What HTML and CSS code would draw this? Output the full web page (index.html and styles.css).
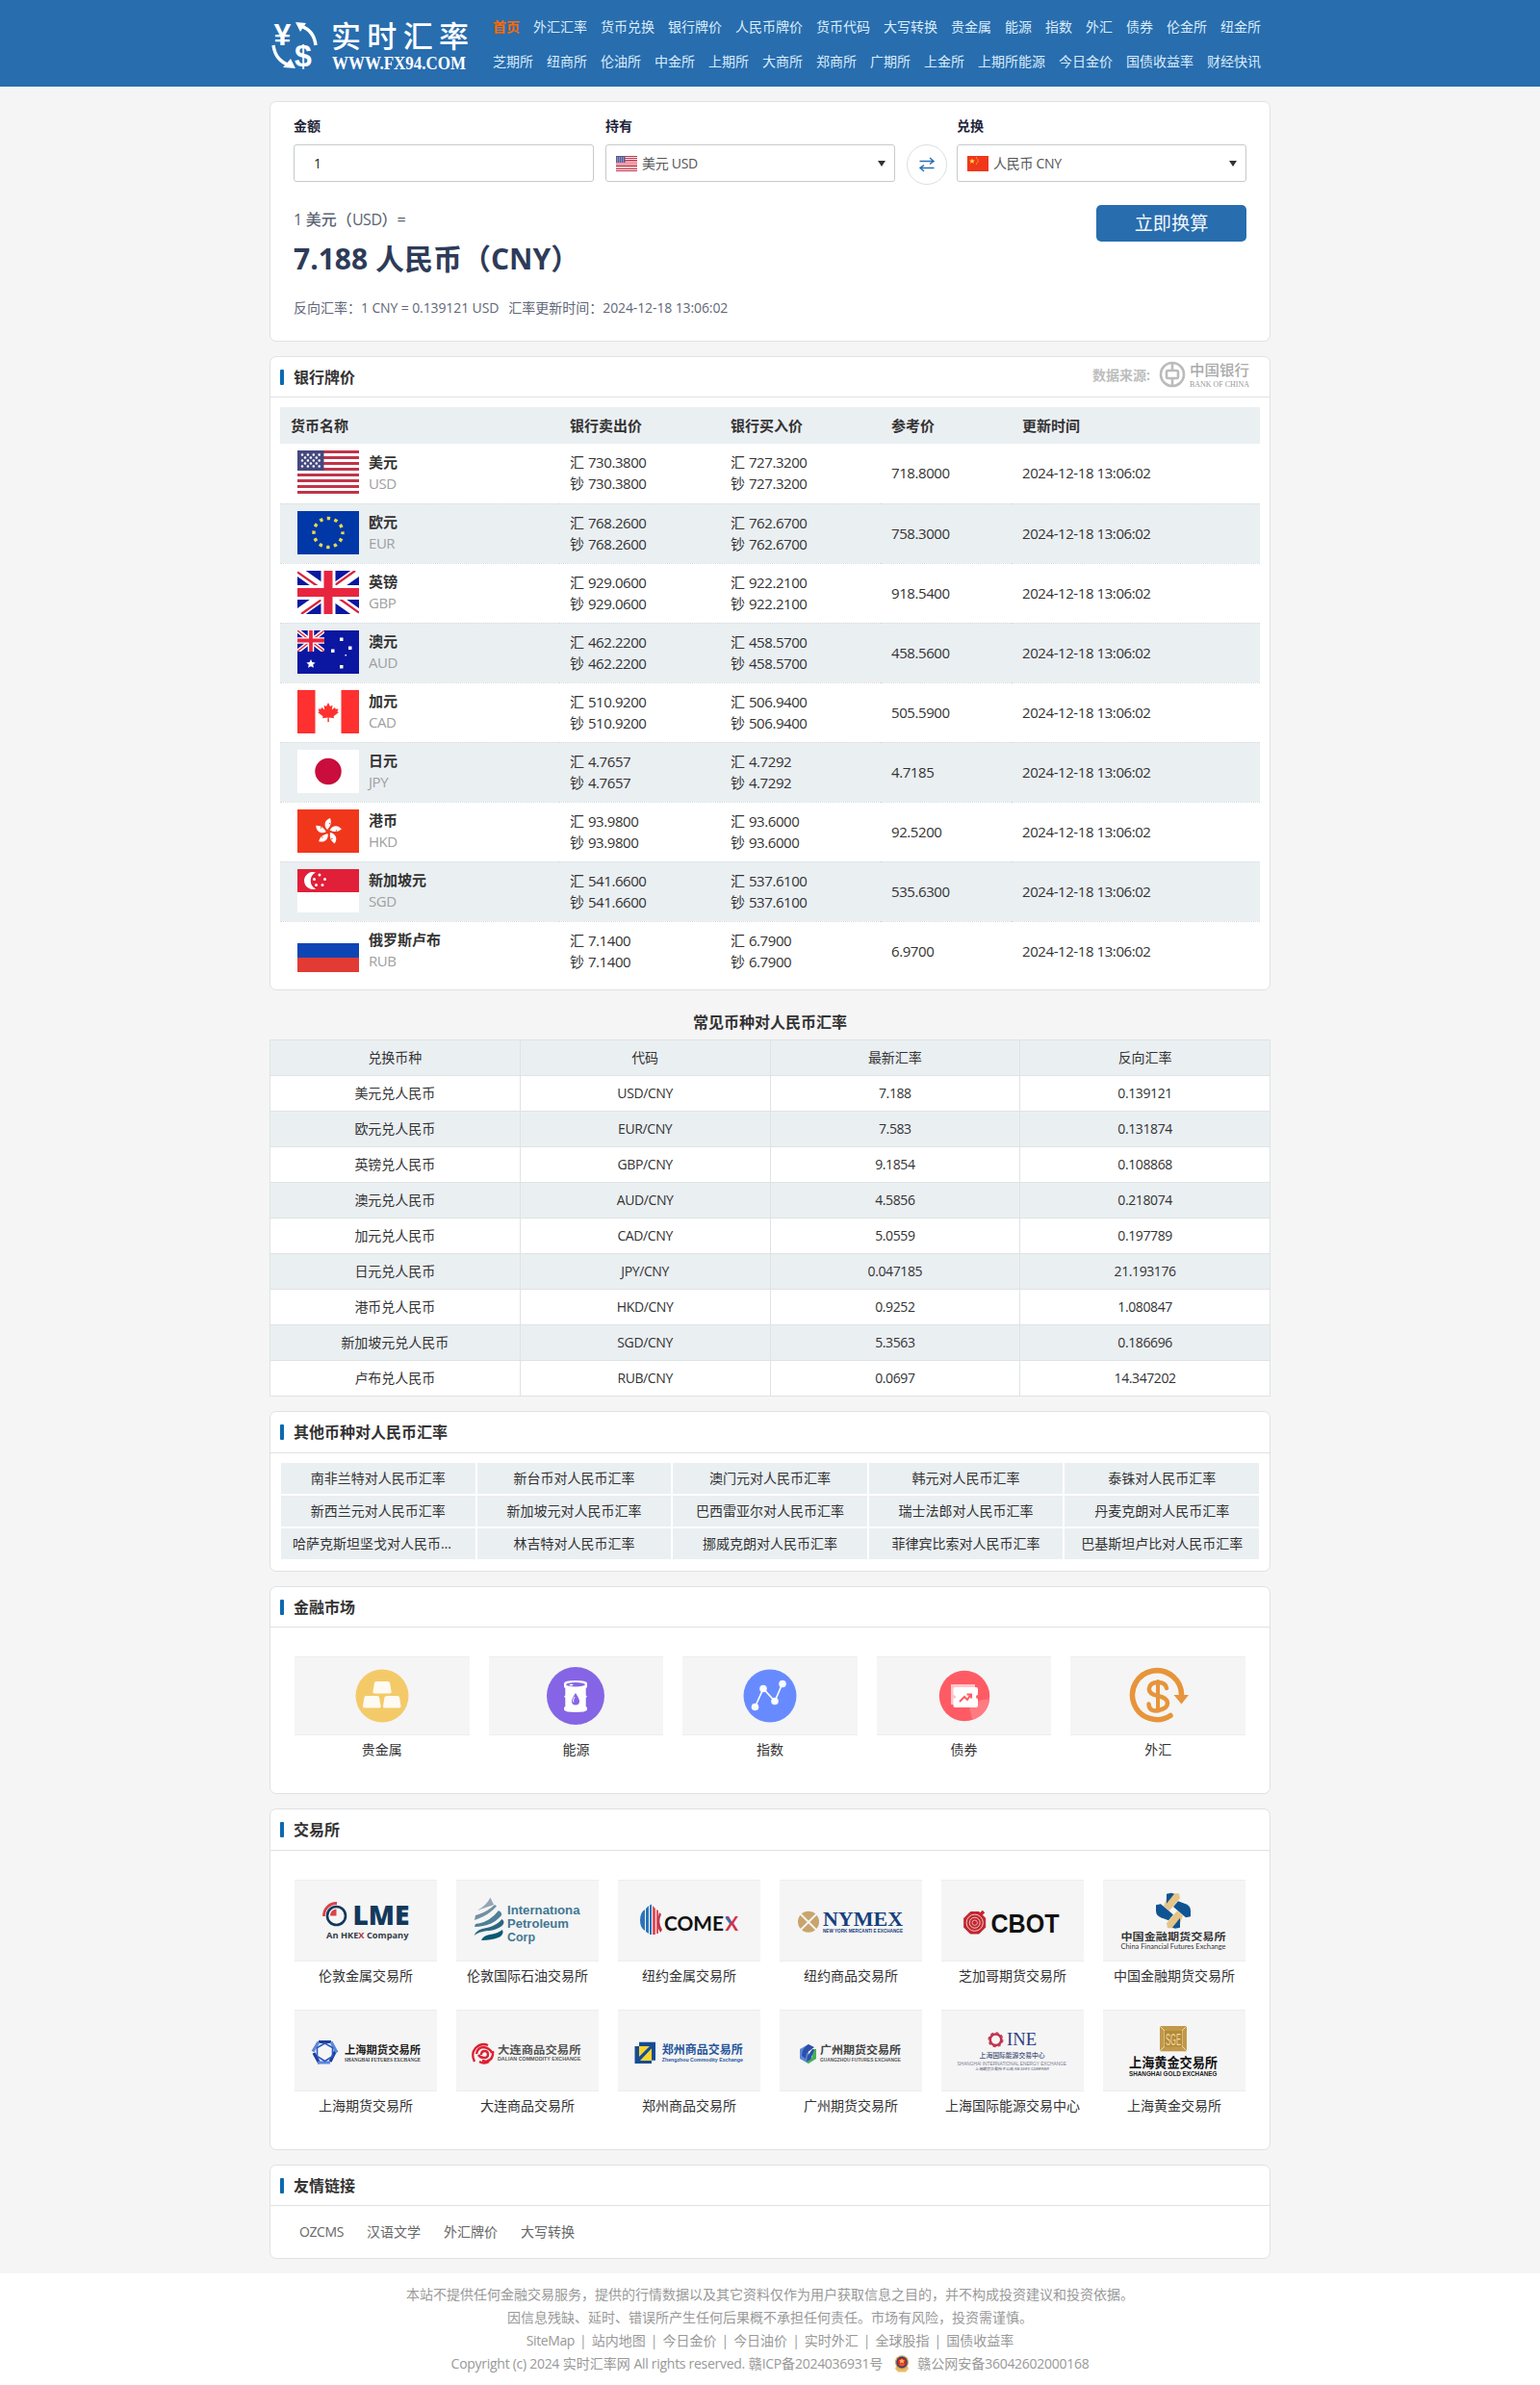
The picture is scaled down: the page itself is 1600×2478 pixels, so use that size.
FILE: index.html
```html
<!DOCTYPE html>
<html lang="zh-CN">
<head>
<meta charset="utf-8">
<title>实时汇率</title>
<link rel="stylesheet" href="styles.css">
</head>
<body>
<header class="top">
  <div class="wrap top-in">
    <svg class="logo" width="224" height="90" viewBox="0 0 224 90">
      <g fill="none" stroke="#fff" stroke-width="3.400"><path d="M32 27Q46 31 48 47"/><path d="M4 47Q6 63 21 68"/></g>
      <path d="M27 23l11 1-6 9zM27 71l-13-1 8-9z" fill="#fff"/>
      <text x="4.500" y="47" class="lg-yen">¥</text>
      <text x="26" y="69" class="lg-dol">$</text>
      <text x="64" y="49" class="lg-cn" textLength="143">实时汇率</text>
      <text x="65" y="71.500" class="lg-en" textLength="139" lengthAdjust="spacingAndGlyphs">WWW.FX94.COM</text>
    </svg>
    <nav class="nav">
      <div class="nav-row"><a class="on">首页</a><a>外汇汇率</a><a>货币兑换</a><a>银行牌价</a><a>人民币牌价</a><a>货币代码</a><a>大写转换</a><a>贵金属</a><a>能源</a><a>指数</a><a>外汇</a><a>债券</a><a>伦金所</a><a>纽金所</a></div>
      <div class="nav-row"><a>芝期所</a><a>纽商所</a><a>伦油所</a><a>中金所</a><a>上期所</a><a>大商所</a><a>郑商所</a><a>广期所</a><a>上金所</a><a>上期所能源</a><a>今日金价</a><a>国债收益率</a><a>财经快讯</a></div>
    </nav>
  </div>
</header>

<main class="wrap main">
  <section class="card conv">
    <div class="conv-row">
      <div class="fld f-amt"><label>金额</label><div class="box amt">1</div></div>
      <div class="fld f-sel"><label>持有</label><div class="box sel">
        <svg width="22" height="16" viewBox="0 0 22 16"><rect width="22" height="16" fill="#e8a0a8"/><g fill="#c0344c"><rect width="22" height="1"/><rect y="2" width="22" height="1"/><rect y="4" width="22" height="1"/><rect y="10" width="22" height="1"/><rect y="13" width="22" height="1"/><rect y="15" width="22" height="1"/></g><path d="M9 1.500h13M9 3.500h13M0 12h22M0 14.500h22" stroke="#fff" stroke-width=".8"/><rect width="9.500" height="7" fill="#5b5a95"/><path d="M1 2h8M1 4h8M1 6h8" stroke="#c9c8e4" stroke-dasharray="1 1"/></svg>
        <span>美元 USD</span><i></i></div></div>
      <div class="swap"><svg width="16" height="16" viewBox="0 0 16 16" fill="none" stroke="#2a6fb3" stroke-width="1.500"><path d="M.5 4.500h14M11 1l4 3.500-4 3M15.500 11.500h-14M5 8.500l-4 3 4 3.500"/></svg></div>
      <div class="fld f-sel"><label>兑换</label><div class="box sel">
        <svg width="22" height="16" viewBox="0 0 22 16"><rect width="22" height="16" fill="#f0371a"/><path d="M5 2.500l.8 2.100h2.200l-1.800 1.300.7 2.100L5 6.700 3.100 8l.7-2.100L2 4.600h2.200z" fill="#fd4"/><path d="M9 2h1M10.500 4h1M10.500 6h1M9 8h1" stroke="#fd4"/></svg>
        <span>人民币 CNY</span><i></i></div></div>
    </div>
    <div class="res-row">
      <div>
        <div class="res-a"><span class="n">1</span> 美元（<span class="n">USD</span>）=</div>
        <div class="res-b">7.188 人民币（CNY）</div>
        <div class="res-c">反向汇率：<span class="n">1 CNY = 0.139121 USD</span><span class="gap"></span>汇率更新时间：<span class="n">2024-12-18 13:06:02</span></div>
      </div>
      <a class="btn">立即换算</a>
    </div>
  </section>

  <section class="card bank">
    <div class="head"><h2>银行牌价</h2>
      <div class="src"><b>数据来源:</b>
        <svg width="104" height="34" viewBox="0 0 104 34"><g fill="none" stroke="#bbb" stroke-width="2.600"><circle cx="14" cy="16" r="12"/><rect x="8" y="12" width="12" height="8" rx="1.500"/><path d="M14 4v8M14 20v8"/></g><text x="32" y="17" class="boc-cn" textLength="62" lengthAdjust="spacingAndGlyphs">中国银行</text><text x="32" y="29" class="boc-en" textLength="62" lengthAdjust="spacingAndGlyphs">BANK OF CHINA</text></svg>
      </div>
    </div>
    <table class="rates">
      <colgroup><col class="c1"><col class="c2"><col class="c2"><col class="c4"><col></colgroup>
      <tr><th>货币名称</th><th>银行卖出价</th><th>银行买入价</th><th>参考价</th><th>更新时间</th></tr>
      <tr><td><div class="cur"><svg viewBox="0 0 64 45"><rect width="64" height="45" fill="#fff"/><path d="M0 1.500h64M0 7.500h64M0 13.500h64M0 19.500h64M0 25.500h64M0 31.500h64M0 37.500h64M0 43.500h64" stroke="#c0344a" stroke-width="3"/><rect width="27.500" height="21" fill="#45497e"/><g stroke="#fff" stroke-width="2.600" stroke-linecap="round" stroke-dasharray="0 5.900"><path d="M5 4.500h20M5 10.500h20M5 16.500h20"/><path d="M8 7.500h15M8 13.500h15"/></g></svg><p><b>美元</b><em>USD</em></p></div></td><td>汇 <span class="n">730.3800</span><br>钞 <span class="n">730.3800</span></td><td>汇 <span class="n">727.3200</span><br>钞 <span class="n">727.3200</span></td><td class="n">718.8000</td><td class="n">2024-12-18 13:06:02</td></tr>
      <tr><td><div class="cur"><svg viewBox="0 0 64 45"><rect width="64" height="45" fill="#0038a8"/><circle cx="32" cy="22.500" r="15" fill="none" stroke="#f0d848" stroke-width="3.400" stroke-dasharray="3.400 4.454" stroke-dashoffset="1.700"/></svg><p><b>欧元</b><em>EUR</em></p></div></td><td>汇 <span class="n">768.2600</span><br>钞 <span class="n">768.2600</span></td><td>汇 <span class="n">762.6700</span><br>钞 <span class="n">762.6700</span></td><td class="n">758.3000</td><td class="n">2024-12-18 13:06:02</td></tr>
      <tr><td><div class="cur"><svg viewBox="0 0 64 45"><rect width="64" height="45" fill="#0b17a0"/><path d="M0 0l64 45M64 0L0 45" stroke="#fff" stroke-width="10"/><path d="M0 1.500l28 19.500M60 0L34 18.500M4 45l26-18.500M64 43.500L38 25" stroke="#d8223c" stroke-width="2.200"/><path d="M32 0v45M0 22.500h64" stroke="#fff" stroke-width="15"/><path d="M32 0v45M0 22.500h64" stroke="#e8253f" stroke-width="9"/></svg><p><b>英镑</b><em>GBP</em></p></div></td><td>汇 <span class="n">929.0600</span><br>钞 <span class="n">929.0600</span></td><td>汇 <span class="n">922.2100</span><br>钞 <span class="n">922.2100</span></td><td class="n">918.5400</td><td class="n">2024-12-18 13:06:02</td></tr>
      <tr><td><div class="cur"><svg viewBox="0 0 64 45"><rect width="64" height="45" fill="#0b17a0"/><svg width="28" height="22" viewBox="0 0 28 22"><path d="M0 0l28 22M28 0L0 22" stroke="#fff" stroke-width="4.500"/><path d="M0 0l28 22M28 0L0 22" stroke="#e0344a" stroke-width="1.400"/><path d="M14 0v22M0 10.500h28" stroke="#fff" stroke-width="6.500"/><path d="M14 0v22M0 10.500h28" stroke="#e8253f" stroke-width="3.800"/></svg><g fill="#fff"><path d="M14 30l1.400 3 3.200.4-2.300 2.200.6 3.200-2.900-1.500-2.900 1.500.6-3.200-2.300-2.200 3.200-.4z"/><rect x="44" y="7.500" width="3.500" height="3.500"/><rect x="35" y="19.500" width="3.500" height="3.500"/><rect x="53" y="16.500" width="3.500" height="3.500"/><rect x="49.500" y="25" width="1.500" height="1.500"/><rect x="44" y="36" width="3.500" height="3.500"/></g></svg><p><b>澳元</b><em>AUD</em></p></div></td><td>汇 <span class="n">462.2200</span><br>钞 <span class="n">462.2200</span></td><td>汇 <span class="n">458.5700</span><br>钞 <span class="n">458.5700</span></td><td class="n">458.5600</td><td class="n">2024-12-18 13:06:02</td></tr>
      <tr><td><div class="cur"><svg viewBox="0 0 64 45"><rect width="64" height="45" fill="#fff"/><path d="M0 0h18.500v45H0zM45.500 0H64v45H45.500z" fill="#fe3030"/><path d="M32 13l2 4 2.500-1.200-.7 4.700 3-2.600 1 1.800 2.700-.3-1 3 1.300.8-5.300 4 .6 2-5.400-.8.200 4.600h-1.600l.2-4.600-5.500.8.600-2-5.300-4 1.300-.8-1-3 2.700.3 1-1.800 3 2.600-.7-4.700L30 17z" fill="#fe3030"/></svg><p><b>加元</b><em>CAD</em></p></div></td><td>汇 <span class="n">510.9200</span><br>钞 <span class="n">510.9200</span></td><td>汇 <span class="n">506.9400</span><br>钞 <span class="n">506.9400</span></td><td class="n">505.5900</td><td class="n">2024-12-18 13:06:02</td></tr>
      <tr><td><div class="cur"><svg viewBox="0 0 64 45"><rect width="64" height="45" fill="#fff"/><circle cx="32" cy="22.500" r="13.700" fill="#c90d3c"/></svg><p><b>日元</b><em>JPY</em></p></div></td><td>汇 <span class="n">4.7657</span><br>钞 <span class="n">4.7657</span></td><td>汇 <span class="n">4.7292</span><br>钞 <span class="n">4.7292</span></td><td class="n">4.7185</td><td class="n">2024-12-18 13:06:02</td></tr>
      <tr><td><div class="cur"><svg viewBox="0 0 64 45"><rect width="64" height="45" fill="#f0371c"/><g fill="#fff" transform="translate(32 23)"><path id="petal" d="M-1-2C-5-6-4-12 2-14 4-9 2-5-1-2z"/><use href="#petal" transform="rotate(72)"/><use href="#petal" transform="rotate(144)"/><use href="#petal" transform="rotate(216)"/><use href="#petal" transform="rotate(288)"/></g><circle cx="32" cy="23" r="8.500" fill="none" stroke="#f0371c" stroke-width="1.200" stroke-dasharray="1.200 9.480" stroke-dashoffset="2"/></svg><p><b>港币</b><em>HKD</em></p></div></td><td>汇 <span class="n">93.9800</span><br>钞 <span class="n">93.9800</span></td><td>汇 <span class="n">93.6000</span><br>钞 <span class="n">93.6000</span></td><td class="n">92.5200</td><td class="n">2024-12-18 13:06:02</td></tr>
      <tr><td><div class="cur"><svg viewBox="0 0 64 45"><rect width="64" height="45" fill="#fff"/><rect width="64" height="24" fill="#e21f38"/><path d="M19 3.500a9 9 0 1 0 0 17 9.500 9.500 0 0 1 0-17z" fill="#fff"/><g fill="#fff"><circle cx="23" cy="6" r="1.500"/><circle cx="17.500" cy="10.500" r="1.500"/><circle cx="28.500" cy="10.500" r="1.500"/><circle cx="19.500" cy="16.500" r="1.500"/><circle cx="26" cy="16.500" r="1.500"/></g></svg><p><b>新加坡元</b><em>SGD</em></p></div></td><td>汇 <span class="n">541.6600</span><br>钞 <span class="n">541.6600</span></td><td>汇 <span class="n">537.6100</span><br>钞 <span class="n">537.6100</span></td><td class="n">535.6300</td><td class="n">2024-12-18 13:06:02</td></tr>
      <tr><td><div class="cur"><svg viewBox="0 0 64 45"><rect width="64" height="45" fill="#fff"/><rect y="15" width="64" height="15" fill="#0d45b4"/><rect y="30" width="64" height="15" fill="#e23a34"/></svg><p><b>俄罗斯卢布</b><em>RUB</em></p></div></td><td>汇 <span class="n">7.1400</span><br>钞 <span class="n">7.1400</span></td><td>汇 <span class="n">6.7900</span><br>钞 <span class="n">6.7900</span></td><td class="n">6.9700</td><td class="n">2024-12-18 13:06:02</td></tr>
    </table>
  </section>

  <h2 class="mid">常见币种对人民币汇率</h2>
  <table class="common">
    <tr><td>兑换币种</td><td>代码</td><td>最新汇率</td><td>反向汇率</td></tr>
    <tr><td>美元兑人民币</td><td class="n">USD/CNY</td><td class="n">7.188</td><td class="n">0.139121</td></tr>
    <tr><td>欧元兑人民币</td><td class="n">EUR/CNY</td><td class="n">7.583</td><td class="n">0.131874</td></tr>
    <tr><td>英镑兑人民币</td><td class="n">GBP/CNY</td><td class="n">9.1854</td><td class="n">0.108868</td></tr>
    <tr><td>澳元兑人民币</td><td class="n">AUD/CNY</td><td class="n">4.5856</td><td class="n">0.218074</td></tr>
    <tr><td>加元兑人民币</td><td class="n">CAD/CNY</td><td class="n">5.0559</td><td class="n">0.197789</td></tr>
    <tr><td>日元兑人民币</td><td class="n">JPY/CNY</td><td class="n">0.047185</td><td class="n">21.193176</td></tr>
    <tr><td>港币兑人民币</td><td class="n">HKD/CNY</td><td class="n">0.9252</td><td class="n">1.080847</td></tr>
    <tr><td>新加坡元兑人民币</td><td class="n">SGD/CNY</td><td class="n">5.3563</td><td class="n">0.186696</td></tr>
    <tr><td>卢布兑人民币</td><td class="n">RUB/CNY</td><td class="n">0.0697</td><td class="n">14.347202</td></tr>
  </table>

  <section class="card other">
    <div class="head"><h2>其他币种对人民币汇率</h2></div>
    <div class="og"><a>南非兰特对人民币汇率</a><a>新台币对人民币汇率</a><a>澳门元对人民币汇率</a><a>韩元对人民币汇率</a><a>泰铢对人民币汇率</a><a>新西兰元对人民币汇率</a><a>新加坡元对人民币汇率</a><a>巴西雷亚尔对人民币汇率</a><a>瑞士法郎对人民币汇率</a><a>丹麦克朗对人民币汇率</a><a>哈萨克斯坦坚戈对人民币汇率</a><a>林吉特对人民币汇率</a><a>挪威克朗对人民币汇率</a><a>菲律宾比索对人民币汇率</a><a>巴基斯坦卢比对人民币汇率</a></div>
  </section>

  <section class="card market">
    <div class="head"><h2>金融市场</h2></div>
    <div class="mg">
      <a><span class="tile"><svg width="64" height="64" viewBox="0 0 64 64"><circle cx="32" cy="32" r="27.500" fill="#f4ca69"/><g fill="#fff" fill-opacity=".92"><path d="M26 17h12q1.500 0 2 1.500l1.600 9q.3 2-1.500 2H24q-1.800 0-1.500-2l1.500-9Q24.500 17 26 17z"/><path d="M15 32h12q1.500 0 2 1.500l1.600 9q.3 2-1.500 2H13.500q-1.800 0-1.500-2l1.500-9Q13.500 32 15 32z"/><path d="M37 32h11q1.500 0 2 1.500l1.500 9q.3 2-1.500 2H34.500q-1.800 0-1.500-2l1.500-9Q35.500 32 37 32z"/></g></svg></span>贵金属</a>
      <a><span class="tile"><svg width="64" height="64" viewBox="0 0 64 64"><circle cx="32" cy="32" r="30" fill="#8565e5"/><path d="M20 19q0-3 12-3t12 3v4l-1.300 1v7.500l1.300 1-1.300 1.500V43l1.300 1v2.500q-1 2.500-12 2.500T20 46.500V44l1.300-1v-9L20 32.500l1.300-1V24L20 23z" fill="#fff"/><ellipse cx="32" cy="20.300" rx="10" ry="2.200" fill="#8565e5"/><ellipse cx="27.500" cy="20.600" rx="2" ry=".9" fill="#fff"/><path d="M32 29q4 6 4 8.500a4 4 0 0 1-8 0Q28 35 32 29z" fill="#8565e5"/><path d="M31 33q-2 3-1.200 5.500" stroke="#fff" stroke-width="1" fill="none"/></svg></span>能源</a>
      <a><span class="tile"><svg width="64" height="64" viewBox="0 0 64 64"><circle cx="32" cy="32" r="27.500" fill="#678bff"/><path d="M16.500 43.500L25 24.500l12 13 8-18.500" fill="none" stroke="#fff" stroke-width="1.600"/><g fill="#fff" fill-opacity=".95"><circle cx="16.500" cy="43.500" r="3.800"/><circle cx="25" cy="24.500" r="3.800"/><circle cx="37" cy="37.500" r="3.800"/><circle cx="45" cy="19.500" r="3.800"/></g></svg></span>指数</a>
      <a><span class="tile"><svg width="64" height="64" viewBox="0 0 64 64"><circle cx="32" cy="32" r="26.200" fill="#ff5b65"/><path d="M37 45q8-11 21.200-9Q56 52 40 57q-1-7-3-12z" fill="#ff7b82"/><path d="M18 20h25v3H22v18h-4z" fill="#ffc5c9"/><path d="M22 23h22q2 0 2 2v6a2 2 0 0 0 0 4v7q0 2-2 2H22q-1.500 0-1.500-2v-7a2 2 0 0 0 0-4v-6q0-2 1.500-2z" fill="#fff"/><path d="M27 38l5-5 3 3 4-6M34.500 30.500h4.500v4" fill="none" stroke="#ff5b65" stroke-width="2"/></svg></span>债券</a>
      <a><span class="tile"><svg width="64" height="64" viewBox="0 0 64 64"><g fill="none" stroke="#e7943a" stroke-width="5.500" stroke-linecap="round"><path d="M45 52.500A25.500 25.500 0 1 1 56.500 32"/><path d="M41 24q-1-6-9-6t-9 6 9 8 10 7.500-9.500 7.500-10-6.500" stroke-width="4.500"/><path d="M32 17v30.500" stroke-width="4"/></g><path d="M48.500 31h15.500l-7.500 9.500z" fill="#e7943a"/></svg></span>外汇</a>
    </div>
  </section>

  <section class="card exch">
    <div class="head"><h2>交易所</h2></div>
    <div class="eg">
      <a><span class="tile"><svg viewBox="0 0 148 85"><circle cx="43.500" cy="37.500" r="9.500" fill="none" stroke="#12395c" stroke-width="2.600"/><path d="M30.500 38A13 13 0 0 1 44 24.500" fill="none" stroke="#d8434c" stroke-width="2.800"/><path d="M43.500 37.500H37q0-6 6.500-7z" fill="#d8434c"/><text x="60.500" y="47.300" class="ltr w9 s29" fill="#12395c" textLength="59" lengthAdjust="spacingAndGlyphs">LME</text><text x="33" y="60.500" class="ltr w7 s8" fill="#333c48" textLength="85.500" lengthAdjust="spacingAndGlyphs">An HKE<tspan fill="#b03040">X</tspan> Company</text></svg></span>伦敦金属交易所</a>
      <a><span class="tile"><svg viewBox="0 0 148 85"><path d="M35.500 18.500Q31 27 22 32 31 29 39 26q-2-4-3.500-7.500z" fill="#95a5b4"/><path d="M42 27.500Q34 37 19 42l1-5Q30 35 40 26z" fill="#738fa3"/><path d="M20 46q15-2 24-14 4 2 3 5-10 12-28 12z" fill="#4f7f99"/><path d="M18.500 58q3-7 13-8 10-2 16-9 4 3 0 7-7 5-15 5-9 1-14 5z" fill="#2b6781"/><path d="M26 63q2-5 9-6 8-1 13-5 2 5-4 8-6 3-18 3z" fill="#075a70"/><g fill="#427893" class="arl s12 w7"><text x="53" y="36.300" textLength="75.500" lengthAdjust="spacingAndGlyphs">Internatıona</text><text x="53" y="50.300" textLength="64" lengthAdjust="spacingAndGlyphs">Petroleum</text><text x="53" y="64.300" textLength="29" lengthAdjust="spacingAndGlyphs">Corp</text></g></svg></span>伦敦国际石油交易所</a>
      <a><span class="tile"><svg viewBox="0 0 148 85"><path d="M23 42q0-8 5-11v22q-5-3-5-11zM29 30l3-3v29l-3-2zM33 26.500l2-1V57h-2z" fill="#2b74b8"/><path d="M36 27l3 3v27h-3zM40 31l2 1v24h-2z" fill="#e0505a"/><path d="M45 36q-4 8 1 16l-2 3q-5-8-1-21z" fill="#c2334a"/><text x="48" y="52.600" class="lato s20 w7" textLength="62" lengthAdjust="spacingAndGlyphs" fill="#111">COME</text><text x="111.500" y="52.600" class="lato s20 w7" textLength="13.500" lengthAdjust="spacingAndGlyphs" fill="#d2304a">X</text><path d="M112.500 39l4.500 6" stroke="#2b74b8" stroke-width="2.500"/></svg></span>纽约金属交易所</a>
      <a><span class="tile"><svg viewBox="0 0 148 85"><circle cx="30" cy="43.700" r="11" fill="#c9a56c"/><path d="M21 35l18 18M39 35L21 53" stroke="#f5f5f5" stroke-width="1.800"/><text x="45" y="47.500" class="ser s20 w7" fill="#16407c" textLength="83" lengthAdjust="spacingAndGlyphs">NYMEX</text><text x="45" y="54.500" class="arl s5 w7" fill="#16407c" textLength="83" lengthAdjust="spacingAndGlyphs">NEW YORK MERCANTI E EXCHANGE</text></svg></span>纽约商品交易所</a>
      <a><span class="tile"><svg viewBox="0 0 148 85"><g fill="none" stroke="#c2272f"><path d="M30.200 33.500h9l6.500 6.500v9.500l-6.500 6.500h-9l-6.500-6.500V40z" fill="#c2272f"/><circle cx="34.700" cy="44.700" r="8.600" stroke="#f2c9cc" stroke-width="1"/><circle cx="34.700" cy="44.700" r="5.500" stroke="#f2c9cc" stroke-width="1"/><circle cx="34.700" cy="44.700" r="2.700" stroke="#f2c9cc" stroke-width=".8"/><path d="M40 37l4-4" stroke-width="3.500"/></g><text x="51.500" y="55.300" class="arl s27 w7" fill="#111" textLength="71" lengthAdjust="spacingAndGlyphs">CBOT</text></svg></span>芝加哥期货交易所</a>
      <a><span class="tile"><svg viewBox="0 0 148 85"><g transform="translate(73 32.300)"><path d="M-7-13q2-5 7-5h6l1 5-11 13-6-5z" fill="#e5c486"/><path d="M-7-17.500l5-1 3 1-8 10z" fill="#0f5492"/><g transform="rotate(90)"><path d="M-7-13q2-5 7-5h6l1 5-11 13-6-5z" fill="#0f5492"/></g><g transform="rotate(180)"><path d="M-7-13q2-5 7-5h6l1 5-11 13-6-5z" fill="#e5c486"/><path d="M-7-17.500l5-1 3 1-8 10z" fill="#0f5492"/></g><g transform="rotate(270)"><path d="M-7-13q2-5 7-5h6l1 5-11 13-6-5z" fill="#0f5492"/></g><path d="M0-4l4 4-4 4-4-4z" fill="#f5f5f5"/></g><text x="18.500" y="62.500" class="cjk s10 w7" fill="#333" textLength="109" lengthAdjust="spacingAndGlyphs">中国金融期货交易所</text><text x="18.500" y="71.500" class="lato s7" fill="#333" textLength="109" lengthAdjust="spacingAndGlyphs">China Financial Futures Exchange</text></svg></span>中国金融期货交易所</a>
      <a><span class="tile"><svg viewBox="0 0 148 85"><g fill="none" stroke-width="3.200"><path d="M25 33.500h13M43 42l-6 12M20 45l6 11" stroke="#1c3f9c"/><path d="M38 33.500l6 11M37 55H24M25 33.500l-6 10" stroke="#5c88dc"/><path d="M31.500 35l8 4.500v9l-8 5-8-5v-9z" stroke="#2a58c0" stroke-width="1.600"/></g><text x="52" y="45.500" class="cjk s11 w7" fill="#222" textLength="79" lengthAdjust="spacingAndGlyphs">上海期货交易所</text><text x="52" y="54" class="ser s6 w7" fill="#333" textLength="79" lengthAdjust="spacingAndGlyphs">SHANGHAI FUTURES EXCHANGE</text></svg></span>上海期货交易所</a>
      <a><span class="tile"><svg viewBox="0 0 148 85"><g fill="none" stroke="#dd2032" stroke-width="2.400"><path d="M19 54q-4-8 1-14 6-6 13-3"/><path d="M21 46q1-7 8-7 6 1 8 6"/><path d="M38 43q1 9-7 11l-4-1"/><path d="M26 47q0-4 3.500-4t3.500 3.500-4 3.500q-4 0-6-3"/><path d="M24 54q5 3 10 0"/></g><text x="43" y="46" class="cjk s11 w7" fill="#555" textLength="86.500" lengthAdjust="spacingAndGlyphs">大连商品交易所</text><text x="43" y="52.600" class="arl s4 w7" fill="#555" textLength="86.500" lengthAdjust="spacingAndGlyphs">DALIAN COMMODITY EXCHANGE</text></svg></span>大连商品交易所</a>
      <a><span class="tile"><svg viewBox="0 0 148 85"><path d="M22 33.700h17v19h-4V56H17.500V38H22z" fill="#164c94"/><path d="M22 38h13L22 51z" fill="#f7d531"/><path d="M35 40v13H23z" fill="#f7d531"/><path d="M21 52L35 38" stroke="#164c94" stroke-width="3"/><text x="45.800" y="45.500" class="cjk s12 w7" fill="#27569c" textLength="84" lengthAdjust="spacingAndGlyphs">郑州商品交易所</text><text x="45.800" y="53.500" class="arl s5 w7" fill="#27569c" textLength="84" lengthAdjust="spacingAndGlyphs">Zhengzhou Commodity Exchange</text></svg></span>郑州商品交易所</a>
      <a><span class="tile"><svg viewBox="0 0 148 85"><path d="M21 41l9-5v20l-9-5z" fill="#5c86d8"/><path d="M30 36l6 3-8 6-1 6-4-3q0-8 7-12z" fill="#2e4fa8"/><path d="M38 41v10l-8 5-3-2 7-5v-8z" fill="#45b05a"/><path d="M29 48l5-7 2 1-4 10-4 2z" fill="#2e4fa8"/><text x="42" y="46.300" class="cjk s11 w7" fill="#444" textLength="84" lengthAdjust="spacingAndGlyphs">广州期货交易所</text><text x="42" y="53.500" class="arl s4 w7" fill="#555" textLength="84" lengthAdjust="spacingAndGlyphs">GUANGZHOU FUTURES EXCHANGE</text></svg></span>广州期货交易所</a>
      <a><span class="tile"><svg viewBox="0 0 148 85"><circle cx="56.500" cy="31.300" r="5.800" fill="none" stroke="#c2324e" stroke-width="2.600"/><circle cx="56.500" cy="31.300" r="7.400" fill="none" stroke="#c2324e" stroke-width="1.200" stroke-dasharray="3 2.800"/><text x="68" y="36.700" class="ser s18" fill="#2f3f7e" textLength="31" lengthAdjust="spacingAndGlyphs">INE</text><text x="39.600" y="49.500" class="cjk s7 w5" fill="#44507a" textLength="68" lengthAdjust="spacingAndGlyphs">上海国际能源交易中心</text><text x="16.500" y="58" class="arl s5" fill="#7b7f96" textLength="113.500" lengthAdjust="spacingAndGlyphs">SHANGHAI INTERNATIONAL ENERGY EXCHANGE</text><text x="35" y="63" class="cjk s3 w5" fill="#666a86" textLength="77" lengthAdjust="spacingAndGlyphs">上海期货交易所子公司 AN SHFE COMPANY</text></svg></span>上海国际能源交易中心</a>
      <a><span class="tile"><svg viewBox="0 0 148 85"><rect x="59" y="17" width="28" height="26.300" fill="#c0994a"/><path d="M59 17l5 5v16l-5 5M87 17l-5 5v16l5 5" fill="none" stroke="#ecd9a8" stroke-width="1"/><rect x="64" y="22" width="18" height="16.500" fill="#b58a36"/><text x="65" y="36.500" class="arl s17" fill="#ecd9a8" textLength="16" lengthAdjust="spacingAndGlyphs">SGE</text><text x="27" y="59.500" class="cjk s14 w7" fill="#111" textLength="92" lengthAdjust="spacingAndGlyphs">上海黄金交易所</text><text x="27" y="69.300" class="arl s7 w7" fill="#222" textLength="91.500" lengthAdjust="spacingAndGlyphs">SHANGHAI GOLD EXCHANEG</text></svg></span>上海黄金交易所</a>
    </div>
  </section>

  <section class="card links">
    <div class="head"><h2>友情链接</h2></div>
    <div class="lk"><a class="n">OZCMS</a><a>汉语文学</a><a>外汇牌价</a><a>大写转换</a></div>
  </section>
</main>

<footer class="foot">
  <p>本站不提供任何金融交易服务，提供的行情数据以及其它资料仅作为用户获取信息之目的，并不构成投资建议和投资依据。</p>
  <p>因信息残缺、延时、错误所产生任何后果概不承担任何责任。市场有风险，投资需谨慎。</p>
  <p class="fl"><a class="n">SiteMap</a><a>站内地图</a><a>今日金价</a><a>今日油价</a><a>实时外汇</a><a>全球股指</a><a>国债收益率</a></p>
  <p class="cp"><span><span class="n">Copyright (c) 2024</span> 实时汇率网 <span class="n">All rights reserved.</span> 赣<span class="n">ICP</span>备<span class="n">2024036931</span>号</span><svg width="16" height="18" viewBox="0 0 16 18"><path d="M3 10h10l2 4-3 3.500H4L1 14z" fill="#e9bd62"/><ellipse cx="8" cy="7.500" rx="7" ry="7.300" fill="#d3a24c"/><ellipse cx="8" cy="7.500" rx="5.700" ry="6" fill="#2b3c8e"/><circle cx="8" cy="7.500" r="4.500" fill="#d92b20"/><path d="M8 4l.8 1.500h1.600L9.200 6.600l.5 1.600L8 7.300l-1.700.9.500-1.600-1.200-1.100h1.600zM5.500 10h5" fill="#f3c650" stroke="#f3c650" stroke-width=".6"/></svg><span>赣公网安备<span class="n">36042602000168</span></span></p>
</footer>
</body>
</html>
```
FILE: styles.css
```css
*{box-sizing:border-box}
body{margin:0;background:#f5f5f5;color:#333;font:14px/24px "Open Sans","Noto Sans CJK SC",sans-serif}
h2,p{margin:0}
table{border-collapse:collapse;border-spacing:0}
svg{display:block;flex:none}
.n{letter-spacing:-.028em}
.wrap{width:1040px;margin:0 auto}

.top{height:90px;background:#286dae;color:#d9ecfb}
.top-in{display:flex}
.nav{padding-top:10px;margin-left:8px}
.nav-row{display:flex;gap:14px;line-height:36px;white-space:nowrap}
.nav .on{color:#ff6a00;font-weight:700}
.logo text{fill:#fff}
.lg-yen{font:700 32px "Liberation Sans",sans-serif}
.lg-dol{font:700 32px "Liberation Sans",sans-serif}
.lg-cn{font:500 31px "Noto Sans CJK SC",sans-serif}
.lg-en{font:700 18px "Liberation Serif",serif}

.main{padding-top:15px}
.card{background:#fff;border:1px solid #dfe1e3;border-radius:7px;margin-bottom:15px}
.head{display:flex;justify-content:space-between;height:42px;border-bottom:1px solid #dfe1e3;padding-left:10px}
.head h2{display:flex;align-items:center;gap:10px;font-size:16px;font-weight:700;line-height:24px;color:#333;height:42px}
.head h2:before{content:"";width:4px;height:16px;border-radius:1px;background:#0b69b0}

.conv{height:250px;padding:13px 24px 0}
.conv-row{display:flex}
.conv label{display:block;font-weight:700;line-height:24px;color:#1e2438;margin-bottom:7px}
.box{height:39px;border:1px solid #c6cacb;border-radius:3px;display:flex;align-items:center;color:#555}
.f-amt{width:312px;margin-right:12px}
.f-sel{width:301px}
.amt{padding-left:20px;color:#222}
.sel{padding:0 9px 0 10px;gap:5px;letter-spacing:-.02em}
.sel i{margin-left:auto;border:4px solid transparent;border-top:6px solid #333;border-bottom:0}
.swap{width:42px;height:42px;border:1px solid #dcdfe0;border-radius:50%;margin:31px 10px 0 12px;display:flex;align-items:center;justify-content:center}
.res-row{display:flex;justify-content:space-between;margin-top:21px}
.res-a{font-size:16px;line-height:30px;font-weight:500;color:#5c6474}
.res-b{font-size:30px;line-height:44px;margin-top:4px;margin-bottom:1px;font-weight:700;color:#2e3b58}
.res-c{margin-top:17px;color:#5f6778}
.res-c .n{letter-spacing:-.008em}
.gap{display:inline-block;width:10px}
.btn{width:156px;height:38px;border-radius:5px;background:#286dae;color:#f3f8fc;font-size:19.200px;line-height:38px;text-align:center}

.bank{height:659px}
.src{display:flex;align-items:center;height:37px;padding-right:11px;gap:8px;font-size:14px;color:#bdbdbd}
.src b{margin-right:1px}
.boc-cn{font:500 15px "Noto Sans CJK SC",sans-serif;fill:#aaa}
.boc-en{font:8px "Liberation Serif",serif;fill:#999}
.rates{width:1018px;margin:10px 10px 0;table-layout:fixed;font-size:15px;line-height:22px}
.c1{width:290px}.c2{width:167px}.c4{width:136px}
.rates th{height:38px;background:#eaeff2;text-align:left;font-weight:700;padding:0 11px}
.rates td{height:62px;padding:0 11px 1px;border-bottom:1px dotted #d5dcdf}
.rates tr:nth-child(odd) td{background:#eaeff2}
.rates tr:last-child td{border:0}
.cur{display:flex;gap:10px;padding:0 0 1px 7px;align-items:center}
.cur>svg{width:64px;height:45px}
.cur b,.cur em{display:block;font-style:normal;font-weight:700}
.cur em{color:#a0a0a0;font-weight:400;letter-spacing:-.03em}

.mid{font-size:16px;font-weight:700;text-align:center;line-height:24px;margin:21px 0 6px}
.common{width:1040px;table-layout:fixed;background:#fff;text-align:center;margin-bottom:15px}
.common td{height:37px;border:1px solid #dfe3e4;padding:0}
.common tr:nth-child(odd) td{background:#eaeff2}

.other{height:167px}
.other .head{height:43px}
.og{display:grid;grid-template-columns:repeat(5,1fr);gap:2px;padding:10px 11px 0}
.og a{background:#eaeff2;height:32px;line-height:32px;padding:0 12px;text-align:center;white-space:nowrap;overflow:hidden;text-overflow:ellipsis}

.market{height:216px}
.mg{display:grid;grid-template-columns:repeat(5,1fr);gap:20px;padding:30px 25px 0;text-align:center}
.tile{display:flex;align-items:center;justify-content:center;background:#f5f5f5;border:1px solid #ededed;border-width:1px 0}
.mg .tile{height:82px;margin-bottom:3px}

.exch{height:355px}
.exch .head{height:43px}
.eg{display:grid;grid-template-columns:repeat(6,1fr);gap:23px 20px;padding:30px 25px 0;text-align:center;white-space:nowrap}
.eg .tile{height:85px;margin-bottom:3px}
.eg .tile svg{width:148px;height:85px;margin:-1px 0}
.ltr{font-family:"Open Sans",sans-serif}
.lato{font-family:Lato,sans-serif}
.ser{font-family:"Liberation Serif",serif}
.arl{font-family:"Liberation Sans",sans-serif}
.cjk{font-family:"Noto Sans CJK SC",sans-serif}
.w5{font-weight:500}.w7{font-weight:700}.w9{font-weight:900}
.s3{font-size:3.500px}.s4{font-size:4.500px}.s5{font-size:5px}.s6{font-size:6px}.s7{font-size:7px}.s8{font-size:8px}.s10{font-size:10px}.s11{font-size:11.500px}.s12{font-size:12px}.s14{font-size:14px}.s17{font-size:17px}.s18{font-size:18px}.s20{font-size:20px}.s27{font-size:27px}.s29{font-size:29px}

.links{height:98px}
.lk{display:flex;gap:24px;padding:15px 30px 0;color:#666}

.foot{background:#fff;color:#999;text-align:center;padding:10px 0;height:116px}
.fl{display:flex;justify-content:center}
.fl a+a:before{content:"|";margin:0 5px}
.cp{display:flex;justify-content:center;align-items:center;gap:12px}
.cp .n{letter-spacing:-.02em}
.cp svg{margin-right:-4px;height:18px}
```
